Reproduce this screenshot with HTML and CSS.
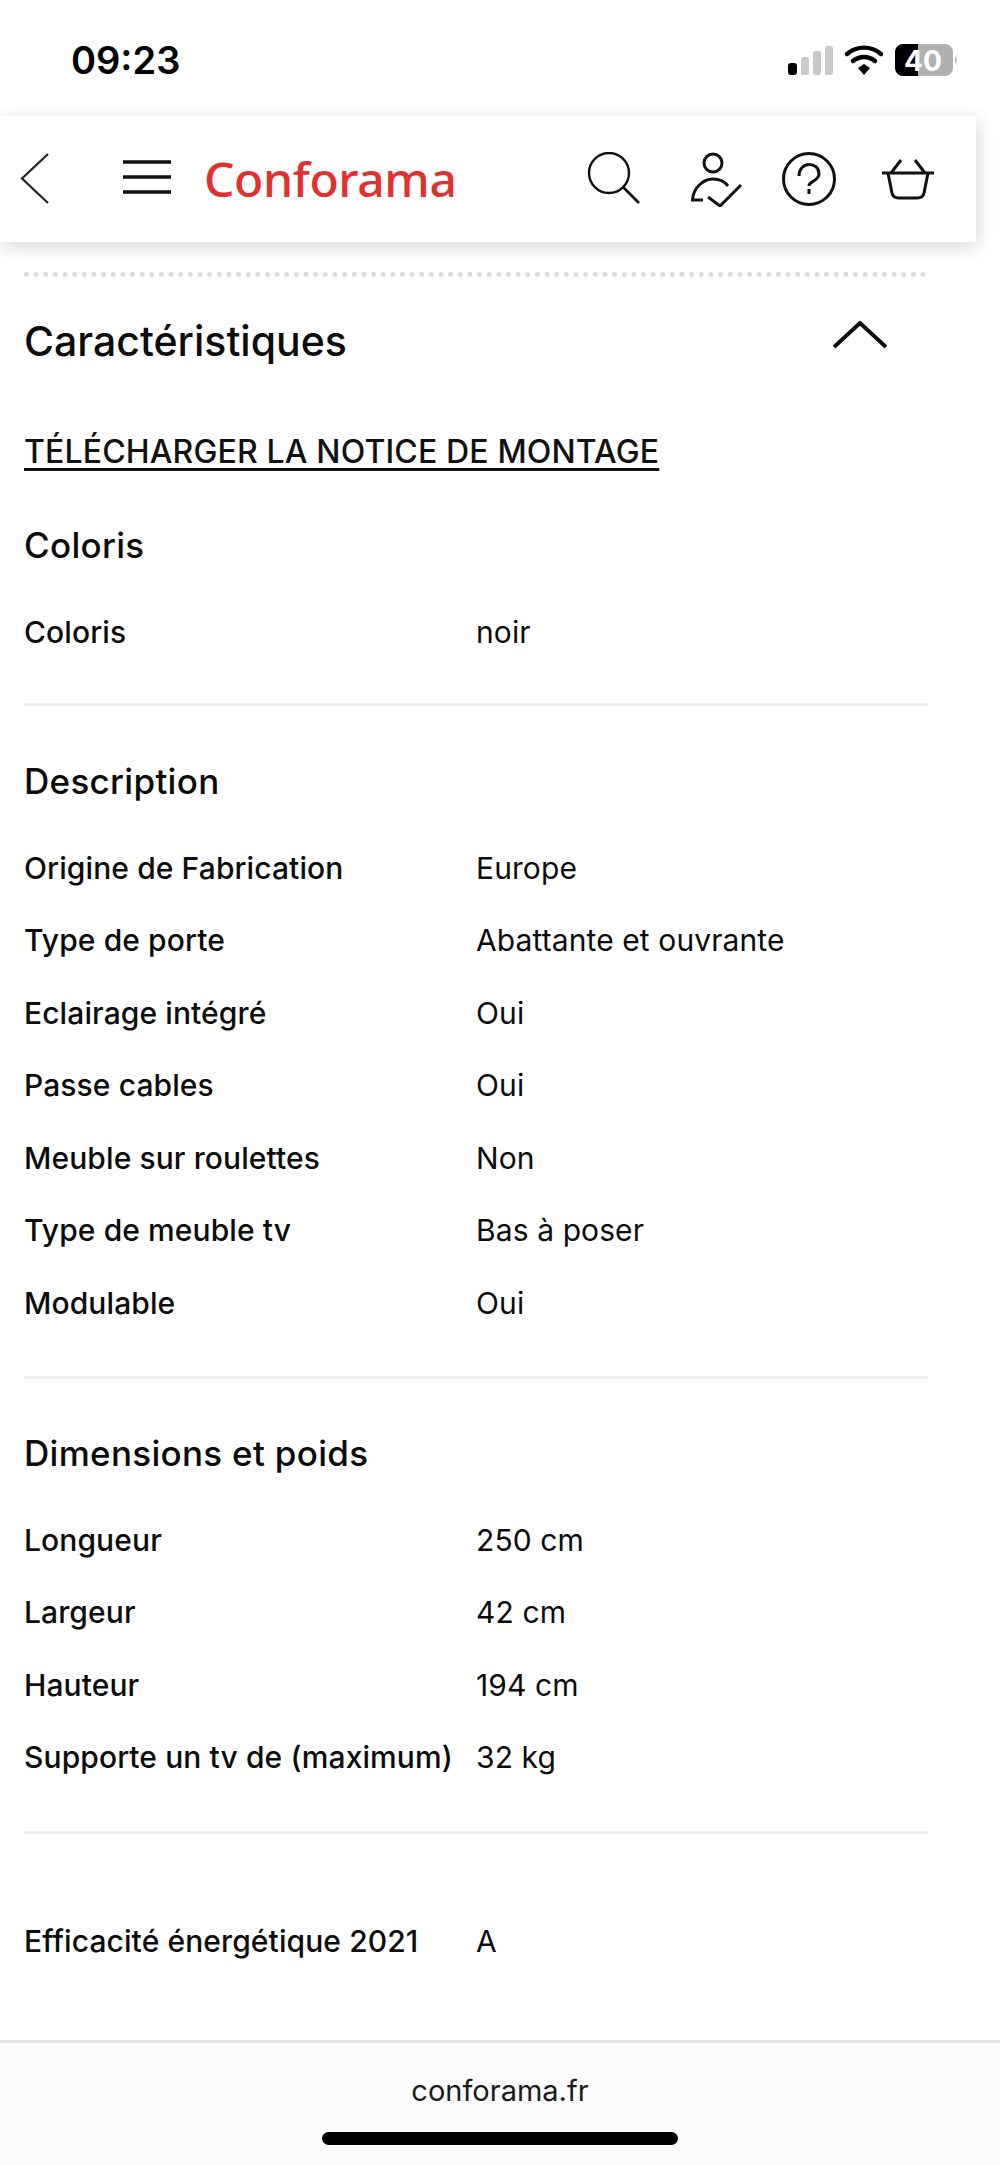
FILE: index.html
```html
<!DOCTYPE html>
<html lang="fr">
<head>
<meta charset="utf-8">
<title>Conforama</title>
<link rel="stylesheet" href="styles.css">
</head>
<body>
<div class="page">
  <div class="status">
    <span class="time">09:23</span>
    <svg class="status-icons" width="172" height="34" viewBox="0 0 172 34">
      <rect x="0" y="19" width="9" height="12" rx="3" fill="#000"/>
      <rect x="13" y="13" width="8" height="18" rx="2.5" fill="#c9c9c9"/>
      <rect x="25" y="7" width="8" height="24" rx="2.5" fill="#c9c9c9"/>
      <rect x="37" y="2" width="8" height="29" rx="2.5" fill="#c9c9c9"/>
      <path d="M59 10 a26 26 0 0 1 34 0" fill="none" stroke="#000" stroke-width="4.4" stroke-linecap="round"/>
      <path d="M65 17 a17 17 0 0 1 22 0" fill="none" stroke="#000" stroke-width="4.4" stroke-linecap="round"/>
      <path d="M70 24 l6 -4 l6 4 l-6 7z" fill="#000"/>
      <path d="M115 0 h15 v32 h-15 a8 8 0 0 1 -8 -8 v-16 a8 8 0 0 1 8 -8z" fill="#000"/>
      <path d="M130 0 h27 a8 8 0 0 1 8 8 v16 a8 8 0 0 1 -8 8 h-27z" fill="#b0b0b0"/>
      <path d="M167 12 q4 4 0 8z" fill="#bdbdbd"/>
      <text x="135" y="27" class="battery-text" text-anchor="middle">40</text>
    </svg>
  </div>
  <header class="nav">
    <svg class="nav-back" width="34" height="54" viewBox="0 0 34 54"><path d="M30 2 L4 26.5 L30 51" fill="none" stroke="#222" stroke-width="2.2"/></svg>
    <svg class="nav-menu" width="48" height="36" viewBox="0 0 48 36"><path d="M0 3h48M0 18h48M0 33h48" stroke="#111" stroke-width="3.6"/></svg>
    <span class="logo">Conforama</span>
    <div class="nav-icons">
      <svg class="icon-search" width="54" height="54" viewBox="0 0 54 54"><circle cx="22" cy="21" r="20" fill="none" stroke="#111" stroke-width="2.4"/><path d="M36 35 L52 51" stroke="#111" stroke-width="2.6"/></svg>
      <svg class="icon-account" width="54" height="56" viewBox="0 0 54 56"><circle cx="24" cy="12" r="9" fill="none" stroke="#111" stroke-width="3"/><path d="M14 49 H3.5 C4 37 14 28 24 28 C30 28 36 31 39 35" fill="none" stroke="#111" stroke-width="3"/><path d="M19 46 L31 55 L52 34" fill="none" stroke="#111" stroke-width="3"/></svg>
      <svg class="icon-help" width="54" height="54" viewBox="0 0 54 54"><circle cx="27" cy="27" r="25.5" fill="none" stroke="#111" stroke-width="3"/><path d="M17 24 C17 9 37 9 37 22 C37 29 27 29 27 34" fill="none" stroke="#111" stroke-width="3"/><path d="M27 37v5" stroke="#111" stroke-width="3"/></svg>
      <svg class="icon-basket" width="54" height="44" viewBox="0 0 54 44"><path d="M0 16H52" stroke="#111" stroke-width="3"/><path d="M6 16 L10 36 Q11 41 17 41 H35 Q41 41 42 36 L46 16" fill="none" stroke="#111" stroke-width="3"/><path d="M9 16 L19 3 M43 16 L33 3" stroke="#111" stroke-width="3"/></svg>
    </div>
  </header>
  <main class="content">
    <div class="dots"></div>
    <div class="title-row">
      <h1 class="title">Caractéristiques</h1>
      <svg class="chevron" width="54" height="28" viewBox="0 0 54 28"><path d="M1 26 L27 2 L53 26" fill="none" stroke="#111" stroke-width="4"/></svg>
    </div>
    <a class="download" href="#">TÉLÉCHARGER LA NOTICE DE MONTAGE</a>

    <section class="group">
      <h2 class="group-title">Coloris</h2>
      <dl class="specs">
        <dt>Coloris</dt><dd>noir</dd>
      </dl>
    </section>
    <section class="group">
      <h2 class="group-title">Description</h2>
      <dl class="specs">
        <dt>Origine de Fabrication</dt><dd>Europe</dd>
        <dt>Type de porte</dt><dd>Abattante et ouvrante</dd>
        <dt>Eclairage intégré</dt><dd>Oui</dd>
        <dt>Passe cables</dt><dd>Oui</dd>
        <dt>Meuble sur roulettes</dt><dd>Non</dd>
        <dt>Type de meuble tv</dt><dd>Bas à poser</dd>
        <dt>Modulable</dt><dd>Oui</dd>
      </dl>
    </section>
    <section class="group">
      <h2 class="group-title">Dimensions et poids</h2>
      <dl class="specs">
        <dt>Longueur</dt><dd>250 cm</dd>
        <dt>Largeur</dt><dd>42 cm</dd>
        <dt>Hauteur</dt><dd>194 cm</dd>
        <dt>Supporte un tv de (maximum)</dt><dd>32 kg</dd>
      </dl>
    </section>
    <dl class="specs energy">
      <dt>Efficacité énergétique 2021</dt><dd>A</dd>
    </dl>
  </main>
  <footer class="browser">
    <span class="url">conforama.fr</span>
    <div class="home"></div>
  </footer>
</div>
</body>
</html>
```

FILE: styles.css
```css
* { box-sizing: border-box; }
html, body { margin: 0; padding: 0; }
body { background: #fff; color: #0c0c0c; font-family: "Inter", "Liberation Sans", sans-serif; }
.page { width: 1000px; height: 2165px; display: flex; flex-direction: column; overflow: hidden; }

.status { height: 116px; padding: 44px 40px 0 71px; display: flex; justify-content: space-between; align-items: flex-start; }
.time { font: 600 38px/32px "Inter", "Liberation Sans", sans-serif; color: #000; }
.status-icons { overflow: visible; }
.battery-text { font: 700 28px "Inter", "Liberation Sans", sans-serif; fill: #fff; }

.nav { width: 976px; height: 126px; flex: none; background: #fff; box-shadow: 2px 4px 18px rgba(0,0,0,.16); display: flex; align-items: center; padding: 0 0 0 18px; position: relative; }
.nav-back { margin-right: 71px; }
.nav-menu { margin-right: 33px; margin-bottom: 4px; }
.logo { font: 500 48px/54px "Noto Sans", "Open Sans", sans-serif; color: #e1312c; letter-spacing: -0.4px; }
.nav-icons { margin-left: auto; margin-right: 40px; display: flex; align-items: center; }
.icon-account { margin-left: 48px; }
.icon-help { margin-left: 39px; }
.icon-basket { margin-left: 46px; }

.content { flex: 1; padding: 0 72px 0 24px; }
.dots { margin-top: 30px; height: 5px; background-image: radial-gradient(circle at 2.5px 2.5px, #dcdcdc 2.2px, transparent 2.7px); background-size: 9.65px 5px; background-repeat: repeat-x; }
.title-row { display: flex; justify-content: space-between; align-items: center; height: 128px; padding: 0 41px 0 0; }
.title { margin: 0; font-size: 41px; font-weight: 500; line-height: 50px; white-space: nowrap; }
.chevron { margin-top: -12px; }
.download { display: block; font-size: 32px; font-weight: 500; line-height: 44px; color: #111; text-decoration: underline; text-underline-offset: 5px; letter-spacing: 0.15px; margin-top: 25px; white-space: nowrap; }

.group { border-bottom: 3px solid #eeeeee; padding-bottom: 35px; }
.group + .group { padding-bottom: 37px; }
.group-title { margin: 0; font-size: 35px; font-weight: 500; line-height: 72.5px; letter-spacing: 0.3px; }
.content > .download + .group .group-title { margin-top: 35px; }
.group + .group .group-title { margin-top: 39px; }
.group + .group + .group .group-title { margin-top: 38px; }
.group .specs { margin-top: 14px; }
.specs { margin: 0; display: grid; grid-template-columns: 452px 1fr; grid-auto-rows: 72.5px; align-items: center; font-size: 30px; letter-spacing: 0.1px; }
.specs dt { font-weight: 500; white-space: nowrap; }
.specs dd { margin: 0; font-weight: 400; }
.energy { margin-top: 71px; }

.browser { flex: none; height: 125px; background: #fbfbfb; border-top: 3px solid #e4e4e4; display: flex; flex-direction: column; align-items: center; padding-top: 30px; }
.url { font-size: 29px; line-height: 36px; color: #1a1a1a; }
.home { width: 356px; height: 13px; margin-top: 23px; border-radius: 7px; background: #000; }
```
